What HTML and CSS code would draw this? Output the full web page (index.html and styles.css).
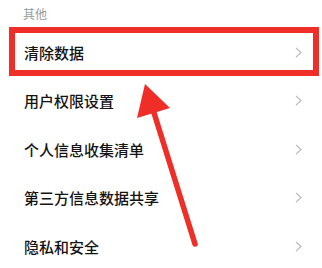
FILE: index.html
```
<!DOCTYPE html>
<html lang="zh-CN">
<head>
    <meta charset="UTF-8">
    <meta name="viewport" content="width=device-width, initial-scale=1.0">
    <title>其他设置</title>
    <link rel="stylesheet" href="styles.css">
</head>
<body>

    <div class="section-title">其他</div>

    <ul class="menu">
        <li class="menu-item">清除数据<svg class="chevron" width="7" height="11" viewBox="0 0 7 11"><polyline points="1,0.8 6,5.5 1,10.2"/></svg></li>
        <li class="menu-item">用户权限设置<svg class="chevron" width="7" height="11" viewBox="0 0 7 11"><polyline points="1,0.8 6,5.5 1,10.2"/></svg></li>
        <li class="menu-item">个人信息收集清单<svg class="chevron" width="7" height="11" viewBox="0 0 7 11"><polyline points="1,0.8 6,5.5 1,10.2"/></svg></li>
        <li class="menu-item">第三方信息数据共享<svg class="chevron" width="7" height="11" viewBox="0 0 7 11"><polyline points="1,0.8 6,5.5 1,10.2"/></svg></li>
        <li class="menu-item">隐私和安全<svg class="chevron" width="7" height="11" viewBox="0 0 7 11"><polyline points="1,0.8 6,5.5 1,10.2"/></svg></li>
    </ul>

    <!-- red annotation drawn over the list -->
    <svg class="annotation" width="322" height="268" viewBox="0 0 322 268">
        <rect x="12" y="30" width="304" height="43" fill="none" stroke="#ef2e28" stroke-width="6"/>
        <line x1="195" y1="244" x2="150" y2="100" stroke="#ef2e28" stroke-width="5.5" stroke-linecap="round"/>
        <polygon points="145,84 137,118 170,108" fill="#ef2e28"/>
    </svg>

</body>
</html>
```

FILE: styles.css
```
body {
    margin: 0;
    width: 322px;
    height: 268px;
    overflow: hidden;
    background-color: #fff;
    font-family: "Noto Sans CJK SC", "Noto Sans", sans-serif;
    position: relative;
}
.section-title {
    height: 28px;
    line-height: 28px;
    padding-left: 23px;
    font-size: 12px;
    color: #9a9a9a;
}
.menu {
    list-style: none;
    margin: 0;
    padding: 0;
}
.menu-item {
    height: 48.5px;
    display: flex;
    align-items: center;
    justify-content: space-between;
    padding: 0 20px 0 24px;
    font-size: 15px;
    font-weight: 500;
    color: #131313;
}
.chevron {
    fill: none;
    stroke: #b5b5b5;
    stroke-width: 1.1;
}
.annotation {
    position: absolute;
    top: 0;
    left: 0;
}
```
